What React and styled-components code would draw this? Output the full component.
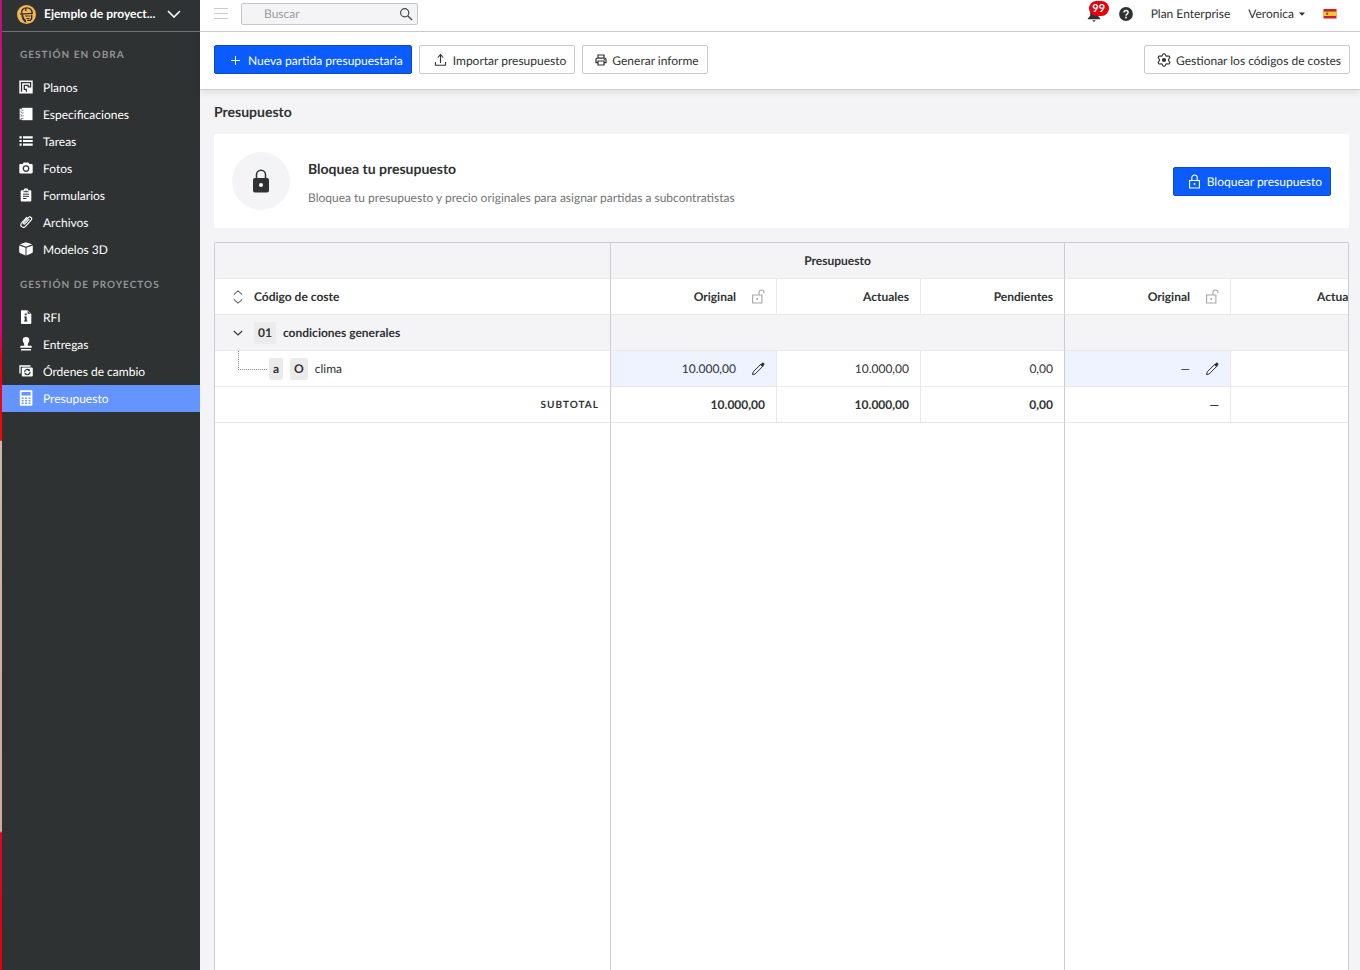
import React from "react";
import styled, { createGlobalStyle, css } from "styled-components";

const ink = "#2f3233";
const line = "#e9e9ec";
const strongLine = "#cccdd4";
const pale = "#f4f4f7";

const GlobalStyle = createGlobalStyle`
  *, *::before, *::after { box-sizing: border-box; }
  body { margin: 0; background: ${pale}; color: ${ink}; font-family: Lato, "Liberation Sans", sans-serif; font-size: 12px; line-height: 16px; text-rendering: geometricPrecision; }
  button, input { font: inherit; color: inherit; text-rendering: inherit; }
  button { cursor: pointer; }
  svg { display: block; flex: none; }
`;

const Page = styled.div`
  display: flex;
  min-height: 100vh;
`;

/* Sidebar */
const Sidebar = styled.aside`
  flex: none;
  width: 200px;
  background: ${ink};
  border-left: 2px solid;
  border-image: linear-gradient(#b9127c 0, #e6007e 12%, #e6007e 34%, #e8001c 37%, #f00a00 45.4%, #cdb5ad 45.5%, #d3a9a8 85.6%, #e2002c 85.8%, #e6000a 100%) 1;
`;

const ProjectButton = styled.button`
  display: flex;
  align-items: center;
  width: 100%;
  height: 32px;
  padding: 0 19px 3px 15px;
  border: 0;
  border-bottom: 1px solid #6d7071;
  background: none;
  color: #fff;
  font-weight: 700;
`;

const ProjectName = styled.span`
  flex: 1;
  padding-left: 8px;
  text-align: left;
`;

const Nav = styled.nav`
  padding-top: 1px;
`;

const NavHeading = styled.h2`
  margin: 0;
  height: 41px;
  padding: 14px 18px 0;
  color: #929495;
  font-size: 10px;
  font-weight: 700;
  line-height: 16px;
  letter-spacing: 1px;
  text-transform: uppercase;
`;

const NavList = styled.ul`
  margin: 0;
  padding: 0;
  list-style: none;
`;

const NavLink = styled.a`
  display: flex;
  align-items: center;
  gap: 10px;
  height: 27px;
  padding-left: 17px;
  color: #fff;
  text-decoration: none;
  background: ${(p) => (p.$active ? "#6394ff" : "transparent")};

  svg { margin-bottom: 1px; }
`;

/* Main area */
const Main = styled.main`
  flex: 1;
  min-width: 0;
  display: flex;
  flex-direction: column;
`;

const TopBar = styled.header`
  display: flex;
  align-items: center;
  height: 32px;
  padding: 0 23px 4px 14px;
  background: #fff;
  border-bottom: 1px solid #cbcbcb;
`;

const PlainButton = styled.button`
  display: flex;
  align-items: center;
  gap: 5px;
  padding: 0;
  border: 0;
  background: none;
`;

const Search = styled.label`
  display: flex;
  align-items: center;
  width: 177px;
  height: 22px;
  margin-left: 13px;
  padding: 0 4px 0 22px;
  border: 1px solid #c6c6c8;
  border-radius: 2px;
  background: ${pale};
`;

const SearchInput = styled.input`
  flex: 1;
  min-width: 0;
  padding: 0;
  border: 0;
  outline: 0;
  background: none;
  &::placeholder { color: #9c9c9e; opacity: 1; }
`;

const Account = styled.div`
  display: flex;
  align-items: center;
  gap: 18px;
  margin-left: auto;
`;

const Alerts = styled.button`
  position: relative;
  padding: 3px 0 0;
  border: 0;
  background: none;
`;

const Badge = styled.span`
  position: absolute;
  top: -4px;
  left: 2px;
  width: 20px;
  height: 15px;
  border-radius: 8px;
  background: #e3000b;
  color: #fff;
  font-size: 11px;
  font-weight: 700;
  line-height: 15px;
  text-align: center;
`;

const Toolbar = styled.div`
  position: relative;
  display: flex;
  gap: 7px;
  padding: 13px 10px 15px 14px;
  background: #fff;
  border-bottom: 1px solid #cbcbcb;
  box-shadow: 0 4px 6px rgba(0, 0, 0, 0.06);
`;

const Button = styled.button`
  display: flex;
  align-items: center;
  gap: 5px;
  height: 29px;
  padding: 2px 8px 0 12px;
  border: 1px solid #cbcbcb;
  border-radius: 2px;
  background: #fff;
  white-space: nowrap;

  svg { margin-bottom: 2px; }

  ${(p) =>
    p.$primary &&
    css`
      background: #0a5cff;
      border-color: #1449bd;
      color: #fff;
    `}
`;

const Spacer = styled.div`
  flex: 1;
`;

const Content = styled.section`
  flex: 1;
  display: flex;
  flex-direction: column;
  padding: 12px 11px 0 14px;
`;

const Title = styled.h1`
  margin: 0 0 12px;
  font-size: 14px;
  font-weight: 700;
  line-height: 20px;
`;

const LockCard = styled.section`
  display: flex;
  align-items: center;
  gap: 18px;
  padding: 18px;
  margin-bottom: 14px;
  border-radius: 2px;
  background: #fff;
`;

const LockDisc = styled.div`
  display: grid;
  place-items: center;
  width: 58px;
  height: 58px;
  border-radius: 50%;
  background: ${pale};
`;

const CardTitle = styled.h2`
  margin: 2px 0 11px;
  font-size: 14px;
  font-weight: 700;
  line-height: 20px;
`;

const CardText = styled.p`
  margin: 0;
  color: #737576;
`;

/* Budget table */
const TableFrame = styled.div`
  flex: 1;
  display: grid;
  overflow-x: auto;
  scrollbar-width: none;
  border: 1px solid ${strongLine};
  border-bottom: 0;
  border-radius: 2px 2px 0 0;
  background: #fff;
`;

const Table = styled.table`
  width: 1160px;
  height: 100%;
  table-layout: fixed;
  border-collapse: separate;
  border-spacing: 0;
`;

const Col = styled.col`
  width: ${(p) => p.$w}px;
`;

const cell = css`
  height: 36px;
  padding: 0 11px;
  text-align: ${(p) => p.$align || "right"};
  border-bottom: 1px solid ${line};
  border-right: 1px solid ${(p) => (p.$edge ? strongLine : line)};
  background: ${(p) => (p.$tone === "pale" ? pale : p.$tone === "edit" ? "#eef3ff" : "transparent")};
`;

const Th = styled.th`
  ${cell}
  font-weight: 700;
`;

const Td = styled.td`
  ${cell}
  font-weight: ${(p) => (p.$bold ? 700 : 400)};
`;

const FillCell = styled.td`
  padding: 0;
  border-right: 1px solid ${(p) => (p.$edge ? strongLine : "transparent")};
`;

const CellLine = styled.div`
  display: flex;
  align-items: center;
  justify-content: ${(p) => (p.$start ? "flex-start" : "flex-end")};
  gap: ${(p) => p.$gap || 7}px;
  height: 35px;
  padding-left: ${(p) => (p.$start ? 5 : 0)}px;
`;

const RowToggle = styled.button`
  display: flex;
  width: 14px;
  margin-right: 2px;
  padding: 0;
  border: 0;
  background: none;
`;

const Tag = styled.span`
  padding: 3px 4px;
  border-radius: 2px;
  background: #ebebeb;
  font-weight: 700;
`;

const Branch = styled.span`
  align-self: flex-start;
  width: 29px;
  height: 19px;
  margin: 0 -5px 0 7px;
  border-left: 1px dotted #8b8d8e;
  border-bottom: 1px dotted #8b8d8e;
`;

const Subtotal = styled.span`
  font-size: 10px;
  letter-spacing: 1px;
`;

/* Icons */
const Svg = ({ w = 14, h = 14, box, children }) => (
  <svg width={w} height={h} viewBox={box || `0 0 ${w} ${h}`} fill="none" aria-hidden="true">
    {children}
  </svg>
);

const NAV_ICONS = {
  plan: (
    <Svg>
      <path fill="#fff" d="M.3.5h13.4v13H.3z" />
      <path stroke={ink} strokeWidth="1.3" d="M2.500 11.800V2.600H11.600V6.800H9.200V5.300H5.300V9.300H7.400V11.800" />
    </Svg>
  ),
  book: (
    <Svg>
      <path fill="#fff" d="M3 .8h10.5v12.4H3z" />
      <path stroke="#fff" strokeWidth="1.1" d="M3.5 2.3H1.2v1.5H3M3.5 5H1.2v1.5H3M3.5 7.8H1.2v1.5H3M3.5 10.5H1.2V12H3" />
      <path stroke={ink} strokeWidth=".6" d="M3 3.2h1.6M3 6h1.6M3 8.8h1.6M3 11.4h1.6" />
    </Svg>
  ),
  list: (
    <Svg>
      <path fill="#fff" d="M.5 2.2h2.2v2.2H.5zM4 2.2h9.7v2.2H4zM.5 5.9h2.2v2.2H.5zM4 5.9h9.7v2.2H4zM.5 9.6h2.2v2.2H.5zM4 9.6h9.7v2.2H4z" />
    </Svg>
  ),
  camera: (
    <Svg>
      <path fill="#fff" d="M4.6 1.6h4.8l1 1.5h2.1c.7 0 1.200.5 1.200 1.200v6.900c0 .7-.5 1.200-1.200 1.200h-11c-.7 0-1.200-.5-1.200-1.200V4.300c0-.7.5-1.200 1.200-1.200h2.100z" />
      <circle cx="7" cy="7.600" r="2.700" stroke={ink} strokeWidth="1.300" />
    </Svg>
  ),
  clipboard: (
    <Svg>
      <path fill="#fff" d="M2.600 2.300h2A2.400 2 0 0 1 9.400 2.300h2c.5 0 .9.400.9.900v9.400c0 .5-.4.9-.9.900H2.600c-.5 0-.9-.4-.9-.9V3.200c0-.5.400-.9.900-.9z" />
      <path stroke={ink} strokeWidth="1" d="M4.500 3.700h5M4 6.200h6M4 8.300h6M4 10.500h3.500" />
      <circle cx="7" cy="2" r=".6" fill={ink} />
    </Svg>
  ),
  clip: (
    <Svg>
      <path stroke="#fff" strokeWidth="1.200" strokeLinecap="round" d="M10 4.400 6 8.700c-.9 1-2.100-.1-1.200-1.100l4.600-5c1.800-1.700 4.400.5 2.700 2.600l-5.600 6.100C3.900 13.900.3 10.700 2.700 7.900l5-5.400" />
    </Svg>
  ),
  cube: (
    <Svg>
      <path fill="#fff" d="M7 .2 13.200 2.300 7 4.700.8 2.300zM.2 3.400 6.500 5.800V13.500L.9 10.900C.5 10.700.2 10.300.2 9.900zM13.800 3.400 7.500 5.800V13.500l5.600-2.600c.4-.2.7-.6.7-1z" />
    </Svg>
  ),
  info: (
    <Svg>
      <path fill="#fff" d="M2.300.2h6L12.300 4v9c0 .5-.4.900-.9.900H2.900c-.5 0-.9-.4-.9-.9V.5z" />
      <path fill={ink} d="M5.800 3.600h1.900v1.700H5.800zM5.100 6.500h2.600v4h.7v1H5v-1h.8v-3h-.7zM8.600.9 11.600 3.700H8.600z" />
    </Svg>
  ),
  stamp: (
    <Svg>
      <path fill="#fff" d="M7 0a3.300 3.300 0 0 1 3.300 3.300c0 1.700-1.500 2.600-1.500 4.300v1.100h2.700c.8 0 1.300.5 1.300 1.200v.9H1.200v-.9c0-.7.500-1.200 1.300-1.200h2.700V7.600c0-1.700-1.500-2.600-1.500-4.300A3.300 3.300 0 0 1 7 0zM2 12h10v1.400H2z" />
    </Svg>
  ),
  change: (
    <Svg>
      <path stroke="#fff" strokeWidth="1.300" d="M1 9.500V2h10.500" />
      <rect x="2.800" y="3.400" width="11" height="9.200" rx="1" fill="#fff" />
      <path stroke={ink} strokeWidth="1.200" d="M5.600 8.200A2.700 2.700 0 0 1 10 6M11 7.800A2.700 2.700 0 0 1 6.600 10.100" />
      <path fill={ink} d="M10.900 4.700v2.400H8.600zM5.700 11.300V8.900H8z" />
    </Svg>
  ),
  calculator: (
    <Svg h={16}>
      <rect x=".8" y=".3" width="12.600" height="15.400" rx="1" fill="#fff" />
      <path fill="#6394ff" d="M2.600 2h9v3.400h-9zM2.800 7.500h1.800v1.600H2.800zM6.200 7.500H8v1.600H6.200zM9.600 7.500h1.800v1.600H9.600zM2.800 9.900h1.800v1.600H2.800zM6.200 9.900H8v1.600H6.200zM9.600 9.900h1.800v1.600H9.600zM2.800 12.400h1.800V14H2.800zM6.200 12.400H8V14H6.200zM9.600 12.400h1.800V14H9.600z" />
    </Svg>
  ),
};

const Logo = () => (
  <Svg w={19} h={19} box="0 0 18 18">
    <circle cx="9" cy="9" r="9" fill="#f5b550" />
    <path stroke={ink} strokeWidth="1.300" d="M4.600 8.600C3.600 5 6 2.700 9.200 2.700S14.600 4.700 14.300 8" />
    <path stroke={ink} strokeWidth="1.300" d="M2.800 8.700 15 7.900M8.300 3v2.600M13.900 9.200v3.300l-1.200 2.100H9.600" />
    <path fill={ink} d="M7.600 9.900h5V11h-5zM8.800 12.300l3-.1v1h-3zM4.200 9h1.700c.1 2.400 1 3.800 2.600 5.400l.2 2.600C5.600 15.400 4.300 12.600 4.200 9z" />
  </Svg>
);

const MenuIcon = () => (
  <Svg w={14} h={11}>
    <path stroke="#cbcbcb" d="M0 .5h14M0 5.500h14M0 10.500h14" />
  </Svg>
);

const SearchIcon = () => (
  <Svg>
    <circle cx="5.700" cy="5.700" r="4.100" stroke="#444748" strokeWidth="1.200" />
    <path d="m8.700 8.700 4.300 4.300" stroke="#444748" strokeWidth="1.400" />
  </Svg>
);

const BellIcon = () => (
  <Svg>
    <path fill={ink} d="M7 0C4.300.5 3.200 2.200 3.200 4.600v3.100L.8 10.500v.8h12.400v-.8l-2.400-2.800V4.600C10.800 2.200 9.700.5 7 0zM5.400 12.300h3.200c-.3 1.800-2.900 1.800-3.200 0z" />
  </Svg>
);

const HelpIcon = () => (
  <Svg>
    <circle cx="7" cy="7" r="6.900" fill={ink} />
    <path stroke="#fff" strokeWidth="1.400" d="M5 5.400c0-2.500 4.100-2.500 4.100 0C9.100 6.900 7 6.900 7 8.700" />
    <circle cx="7" cy="10.500" r=".9" fill="#fff" />
  </Svg>
);

const FlagIcon = () => (
  <Svg w={14} h={11}>
    <path fill="#c9202b" d="M.5 1h13v9.500H.5z" />
    <path fill="#fbc72e" d="M.5 3.600h13V8H.5z" />
    <path fill="#a4552b" d="M3 4.500h2.200V7H3z" />
  </Svg>
);

const PlusIcon = () => (
  <Svg w={16} h={14}>
    <path stroke="currentColor" d="M8.500 3v9M4 7.500h9" />
  </Svg>
);

const UploadIcon = () => (
  <Svg w={16}>
    <path stroke="currentColor" strokeWidth="1.100" d="M8.500 10V2M5.800 4.500l2.700-2.900 2.700 2.900M3.500 9v3.300h10V9" />
  </Svg>
);

const PrinterIcon = () => (
  <Svg w={12} h={12}>
    <path stroke="currentColor" strokeWidth="1.200" d="M3 4V1h6v3M3 8.600H1V5.500C1 4.700 1.700 4.100 2.500 4.100h7c.8 0 1.500.6 1.500 1.400v3.100H9M3 7h6v4H3z" />
    <circle cx="9.300" cy="5.700" r=".6" fill="currentColor" />
  </Svg>
);

const GearIcon = () => (
  <Svg>
    <path
      stroke="currentColor"
      strokeWidth="1.100"
      strokeLinejoin="round"
      d="M6.300.7h1.400L9.200 3.100l2.900-.1.800 1.400L11.300 7l1.600 2.600-.8 1.400-2.900-.1-1.500 2.400H6.300L4.800 10.900l-2.900.1-.8-1.400L2.700 7 1.100 4.400l.8-1.400 2.900.1z"
    />
    <circle cx="7" cy="7" r="2.100" fill="currentColor" />
  </Svg>
);

const LockSolid = () => (
  <Svg w={18} h={24}>
    <path stroke={ink} strokeWidth="1.500" d="M4.500 9.500V5.700a4.500 4.500 0 0 1 9 0v3.800" />
    <rect x="1" y="9" width="16" height="14.500" rx="2" fill={ink} />
    <circle cx="9" cy="16" r="2" fill="#fff" />
  </Svg>
);

const LockOutline = () => (
  <Svg w={16} h={15}>
    <path stroke="currentColor" strokeWidth="1.100" d="M3.600 6.500h9.800v7.500H3.600zM5.800 6.500V3.700a2.700 2.700 0 0 1 5.400 0v2.800" />
    <circle cx="8.500" cy="10" r="1" fill="currentColor" />
  </Svg>
);

const UnlockIcon = () => (
  <Svg w={14} h={15}>
    <path stroke="#a7a8a9" strokeWidth="1.100" d="M1.600 6h9.300v8H1.600zM8 6V3.400c0-3.200 5-3.200 5 0v.9" />
    <circle cx="6.200" cy="10" r="1" fill="#a7a8a9" />
  </Svg>
);

const PencilIcon = () => (
  <Svg>
    <path stroke={ink} strokeLinejoin="round" d="m1.500 12.600.7-2.700 7.600-7.600 2 2L4.200 12z" />
    <path fill={ink} d="m9.200 2.800 1.900-1.900c.5-.5 1-.5 1.500 0l.6.600c.5.500.5 1 0 1.500l-1.900 1.900z" />
  </Svg>
);

const SECTIONS = [
  {
    title: "Gestión en obra",
    items: [
      ["plan", "Planos"],
      ["book", "Especificaciones"],
      ["list", "Tareas"],
      ["camera", "Fotos"],
      ["clipboard", "Formularios"],
      ["clip", "Archivos"],
      ["cube", "Modelos 3D"],
    ],
  },
  {
    title: "Gestión de proyectos",
    items: [
      ["info", "RFI"],
      ["stamp", "Entregas"],
      ["change", "Órdenes de cambio"],
      ["calculator", "Presupuesto"],
    ],
  },
];

const COLUMNS = [396, 166, 144, 144, 166, 144];
const EDGES = [0, 3, 5];

const OriginalHead = () => (
  <Th scope="col">
    <CellLine $gap={15}>
      Original
      <UnlockIcon />
    </CellLine>
  </Th>
);

const EditableCell = ({ value }) => (
  <Td $tone="edit">
    <CellLine $gap={15}>
      {value}
      <PlainButton aria-label="Editar">
        <PencilIcon />
      </PlainButton>
    </CellLine>
  </Td>
);

const BudgetTable = () => (
  <TableFrame>
    <Table>
      <colgroup>
        {COLUMNS.map((w, i) => (
          <Col key={i} $w={w} />
        ))}
      </colgroup>
      <thead>
        <tr>
          <Th $tone="pale" $edge />
          <Th $tone="pale" $edge $align="center" colSpan={3} scope="colgroup">
            Presupuesto
          </Th>
          <Th $tone="pale" $edge colSpan={2} />
        </tr>
        <tr>
          <Th $edge $align="left" scope="col">
            <CellLine $start>
              <RowToggle aria-label="Contraer todo">
                <Svg>
                  <path d="M2.800 4.600 7 .8l4.200 3.800M2.800 9.400 7 13.200l4.200-3.800" stroke={ink} />
                </Svg>
              </RowToggle>
              <span>Código de coste</span>
            </CellLine>
          </Th>
          <OriginalHead />
          <Th scope="col">Actuales</Th>
          <Th scope="col" $edge>Pendientes</Th>
          <OriginalHead />
          <Th scope="col" $edge>Actuales</Th>
        </tr>
      </thead>
      <tbody>
        <tr>
          <Th $tone="pale" $edge $align="left" scope="row">
            <CellLine $start>
              <RowToggle aria-label="Contraer">
                <Svg h={8}>
                  <path d="M2.800 2 7 6l4.200-4" stroke={ink} strokeWidth="1.100" />
                </Svg>
              </RowToggle>
              <Tag>01</Tag>
              <span>condiciones generales</span>
            </CellLine>
          </Th>
          <Td $tone="pale" $edge colSpan={3} />
          <Td $tone="pale" $edge colSpan={2} />
        </tr>
        <tr>
          <Td $edge $align="left">
            <CellLine $start>
              <Branch />
              <Tag>a</Tag>
              <Tag>O</Tag>
              <span>clima</span>
            </CellLine>
          </Td>
          <EditableCell value="10.000,00" />
          <Td>10.000,00</Td>
          <Td $edge>0,00</Td>
          <EditableCell value="—" />
          <Td $edge />
        </tr>
        <tr>
          <Th $edge scope="row">
            <Subtotal>SUBTOTAL</Subtotal>
          </Th>
          <Td $bold>10.000,00</Td>
          <Td $bold>10.000,00</Td>
          <Td $bold $edge>0,00</Td>
          <Td $bold>—</Td>
          <Td $edge />
        </tr>
        <tr aria-hidden="true">
          {COLUMNS.map((w, i) => (
            <FillCell key={i} $edge={EDGES.includes(i)} />
          ))}
        </tr>
      </tbody>
    </Table>
  </TableFrame>
);

export default function App() {
  return (
    <Page>
      <GlobalStyle />
      <Sidebar>
        <ProjectButton>
          <Logo />
          <ProjectName>Ejemplo de proyect...</ProjectName>
          <Svg h={8}>
            <path d="M1 1l6 6 6-6" stroke="currentColor" strokeWidth="1.600" />
          </Svg>
        </ProjectButton>
        <Nav>
          {SECTIONS.map((section) => (
            <React.Fragment key={section.title}>
              <NavHeading>{section.title}</NavHeading>
              <NavList>
                {section.items.map(([icon, label]) => (
                  <li key={label}>
                    <NavLink href="#" $active={icon === "calculator"}>
                      {NAV_ICONS[icon]}
                      {label}
                    </NavLink>
                  </li>
                ))}
              </NavList>
            </React.Fragment>
          ))}
        </Nav>
      </Sidebar>
      <Main>
        <TopBar>
          <PlainButton aria-label="Menú">
            <MenuIcon />
          </PlainButton>
          <Search>
            <SearchInput type="text" placeholder="Buscar" aria-label="Buscar" />
            <SearchIcon />
          </Search>
          <Account>
            <Alerts aria-label="Notificaciones">
              <BellIcon />
              <Badge>99</Badge>
            </Alerts>
            <PlainButton aria-label="Ayuda">
              <HelpIcon />
            </PlainButton>
            <span>Plan Enterprise</span>
            <PlainButton>
              Veronica
              <Svg w={6} h={4}>
                <path fill={ink} d="M0 .500h6L3 3.800z" />
              </Svg>
            </PlainButton>
            <PlainButton aria-label="Idioma">
              <FlagIcon />
            </PlainButton>
          </Account>
        </TopBar>
        <Toolbar>
          <Button $primary>
            <PlusIcon />
            Nueva partida presupuestaria
          </Button>
          <Button>
            <UploadIcon />
            Importar presupuesto
          </Button>
          <Button>
            <PrinterIcon />
            Generar informe
          </Button>
          <Spacer />
          <Button>
            <GearIcon />
            Gestionar los códigos de costes
          </Button>
        </Toolbar>
        <Content>
          <Title>Presupuesto</Title>
          <LockCard>
            <LockDisc>
              <LockSolid />
            </LockDisc>
            <div>
              <CardTitle>Bloquea tu presupuesto</CardTitle>
              <CardText>Bloquea tu presupuesto y precio originales para asignar partidas a subcontratistas</CardText>
            </div>
            <Spacer />
            <Button $primary>
              <LockOutline />
              Bloquear presupuesto
            </Button>
          </LockCard>
          <BudgetTable />
        </Content>
      </Main>
    </Page>
  );
}
